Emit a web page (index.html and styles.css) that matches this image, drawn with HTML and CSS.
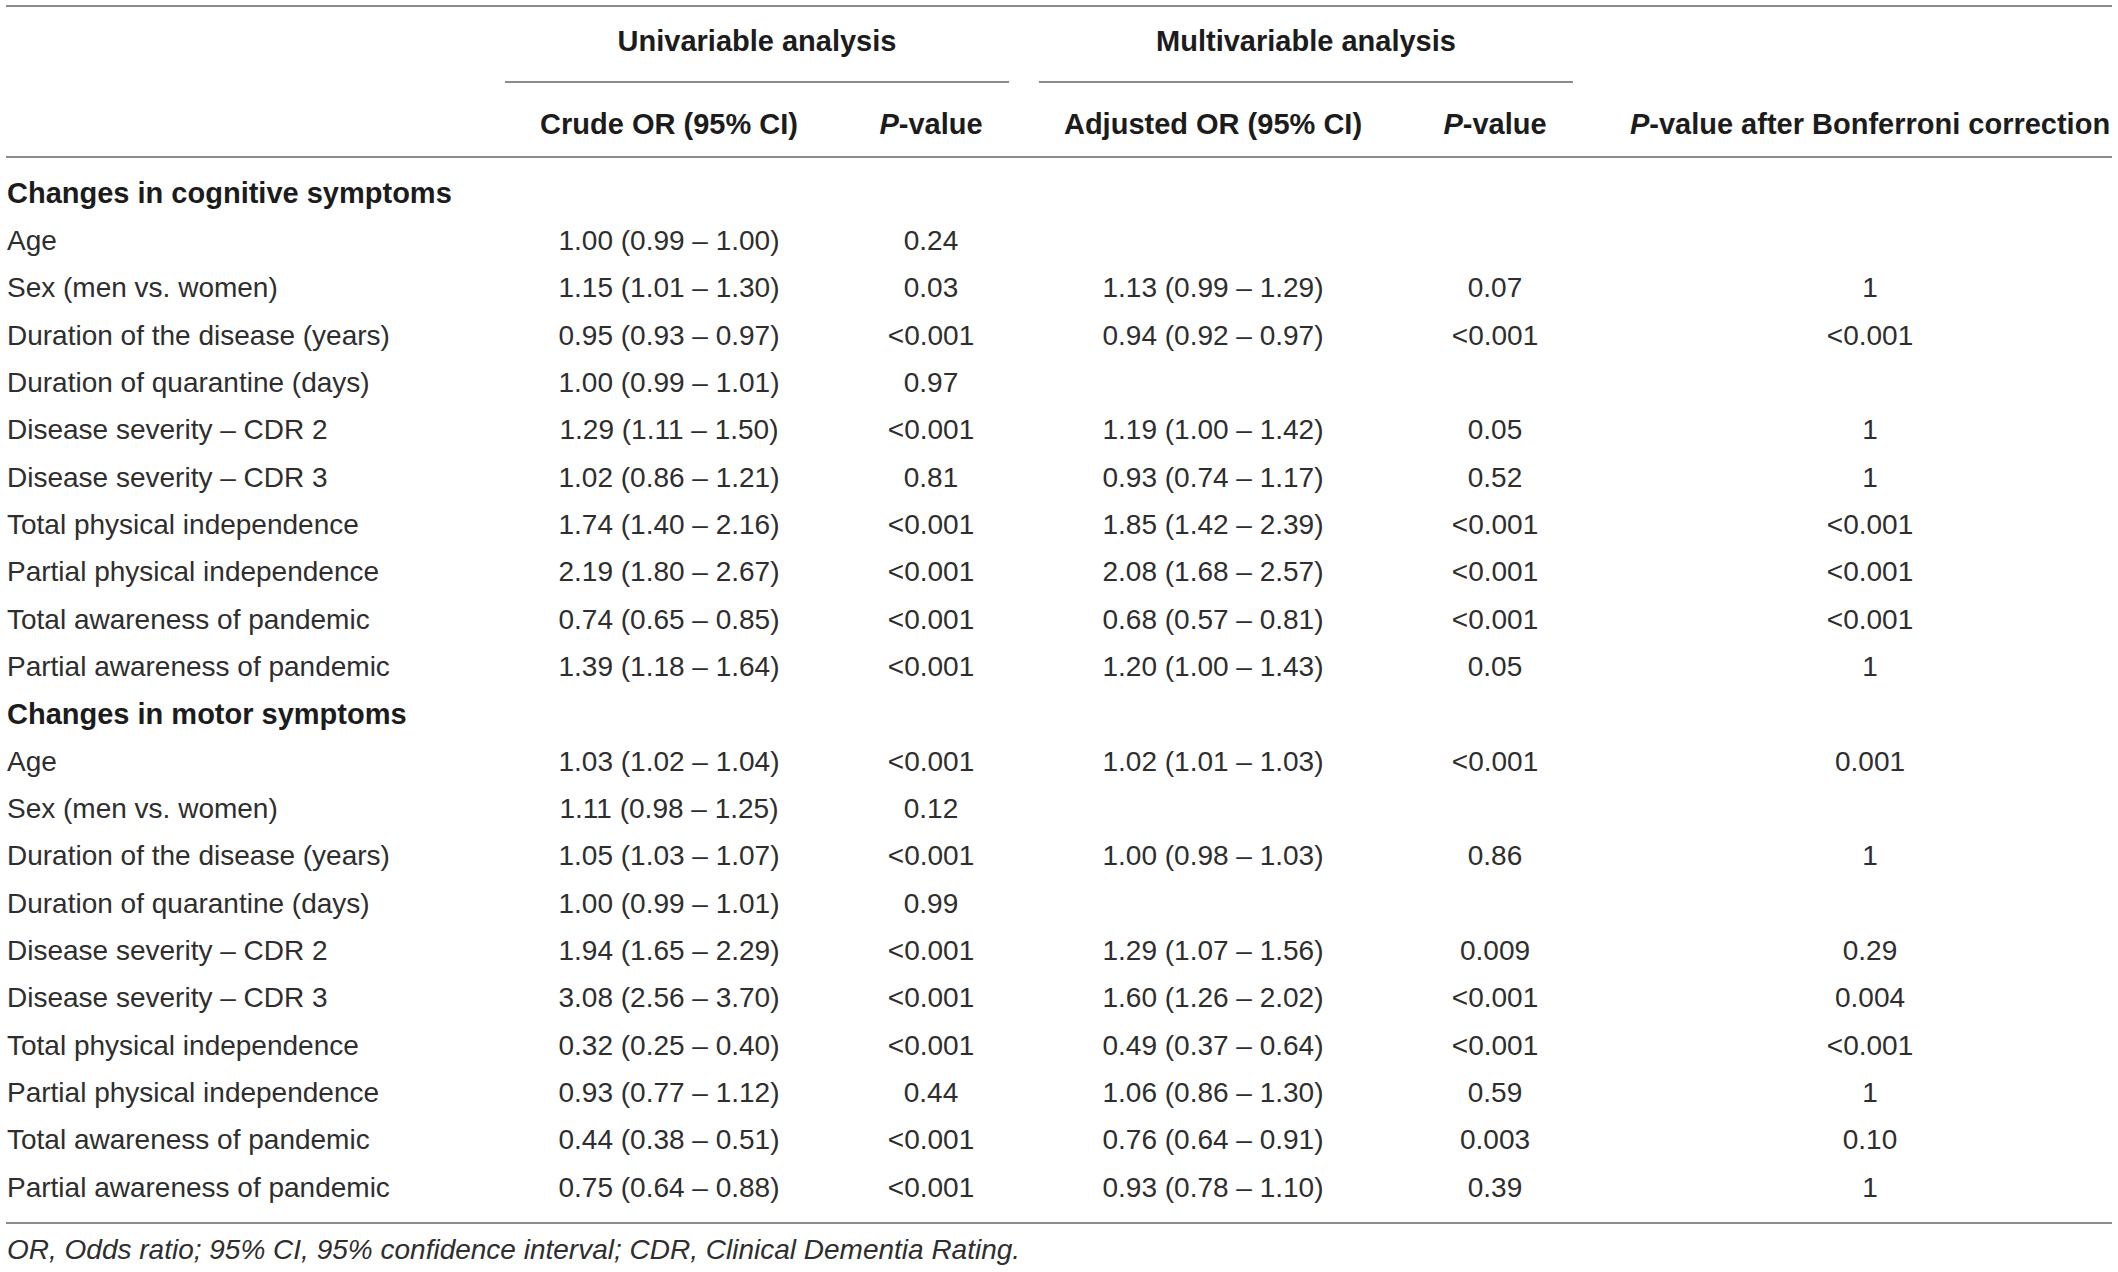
FILE: index.html
```html
<!DOCTYPE html>
<html lang="en">
<head>
<meta charset="utf-8">
<title>Odds ratios table</title>
<link rel="stylesheet" href="styles.css">
</head>
<body>
<div class="wrap">
<table class="tbl">
  <thead class="head">
    <tr class="group-row">
      <th class="c-label"></th>
      <th class="group g-uni"><span class="group-inner uni">Univariable analysis</span></th>
      <th class="group g-multi"><span class="group-inner multi">Multivariable analysis</span></th>
      <th class="c-bonf"></th>
    </tr>
    <tr class="col-row">
      <th class="c-label"></th>
      <th class="c-ci">Crude OR (95% CI)</th>
      <th class="c-p"><i>P</i>-value</th>
      <th class="c-ci">Adjusted OR (95% CI)</th>
      <th class="c-p2"><i>P</i>-value</th>
      <th class="c-bonf"><i>P</i>-value after Bonferroni correction</th>
    </tr>
  </thead>
  <tbody class="body">
    <tr class="row section"><th class="c-label">Changes in cognitive symptoms</th></tr>
    <tr class="row"><td class="c-label">Age</td><td class="c-ci">1.00 (0.99 – 1.00)</td><td class="c-p">0.24</td><td class="c-ci"></td><td class="c-p2"></td><td class="c-bonf"></td></tr>
    <tr class="row"><td class="c-label">Sex (men vs. women)</td><td class="c-ci">1.15 (1.01 – 1.30)</td><td class="c-p">0.03</td><td class="c-ci">1.13 (0.99 – 1.29)</td><td class="c-p2">0.07</td><td class="c-bonf">1</td></tr>
    <tr class="row"><td class="c-label">Duration of the disease (years)</td><td class="c-ci">0.95 (0.93 – 0.97)</td><td class="c-p">&lt;0.001</td><td class="c-ci">0.94 (0.92 – 0.97)</td><td class="c-p2">&lt;0.001</td><td class="c-bonf">&lt;0.001</td></tr>
    <tr class="row"><td class="c-label">Duration of quarantine (days)</td><td class="c-ci">1.00 (0.99 – 1.01)</td><td class="c-p">0.97</td><td class="c-ci"></td><td class="c-p2"></td><td class="c-bonf"></td></tr>
    <tr class="row"><td class="c-label">Disease severity – CDR 2</td><td class="c-ci">1.29 (1.11 – 1.50)</td><td class="c-p">&lt;0.001</td><td class="c-ci">1.19 (1.00 – 1.42)</td><td class="c-p2">0.05</td><td class="c-bonf">1</td></tr>
    <tr class="row"><td class="c-label">Disease severity – CDR 3</td><td class="c-ci">1.02 (0.86 – 1.21)</td><td class="c-p">0.81</td><td class="c-ci">0.93 (0.74 – 1.17)</td><td class="c-p2">0.52</td><td class="c-bonf">1</td></tr>
    <tr class="row"><td class="c-label">Total physical independence</td><td class="c-ci">1.74 (1.40 – 2.16)</td><td class="c-p">&lt;0.001</td><td class="c-ci">1.85 (1.42 – 2.39)</td><td class="c-p2">&lt;0.001</td><td class="c-bonf">&lt;0.001</td></tr>
    <tr class="row"><td class="c-label">Partial physical independence</td><td class="c-ci">2.19 (1.80 – 2.67)</td><td class="c-p">&lt;0.001</td><td class="c-ci">2.08 (1.68 – 2.57)</td><td class="c-p2">&lt;0.001</td><td class="c-bonf">&lt;0.001</td></tr>
    <tr class="row"><td class="c-label">Total awareness of pandemic</td><td class="c-ci">0.74 (0.65 – 0.85)</td><td class="c-p">&lt;0.001</td><td class="c-ci">0.68 (0.57 – 0.81)</td><td class="c-p2">&lt;0.001</td><td class="c-bonf">&lt;0.001</td></tr>
    <tr class="row"><td class="c-label">Partial awareness of pandemic</td><td class="c-ci">1.39 (1.18 – 1.64)</td><td class="c-p">&lt;0.001</td><td class="c-ci">1.20 (1.00 – 1.43)</td><td class="c-p2">0.05</td><td class="c-bonf">1</td></tr>
    <tr class="row section"><th class="c-label">Changes in motor symptoms</th></tr>
    <tr class="row"><td class="c-label">Age</td><td class="c-ci">1.03 (1.02 – 1.04)</td><td class="c-p">&lt;0.001</td><td class="c-ci">1.02 (1.01 – 1.03)</td><td class="c-p2">&lt;0.001</td><td class="c-bonf">0.001</td></tr>
    <tr class="row"><td class="c-label">Sex (men vs. women)</td><td class="c-ci">1.11 (0.98 – 1.25)</td><td class="c-p">0.12</td><td class="c-ci"></td><td class="c-p2"></td><td class="c-bonf"></td></tr>
    <tr class="row"><td class="c-label">Duration of the disease (years)</td><td class="c-ci">1.05 (1.03 – 1.07)</td><td class="c-p">&lt;0.001</td><td class="c-ci">1.00 (0.98 – 1.03)</td><td class="c-p2">0.86</td><td class="c-bonf">1</td></tr>
    <tr class="row"><td class="c-label">Duration of quarantine (days)</td><td class="c-ci">1.00 (0.99 – 1.01)</td><td class="c-p">0.99</td><td class="c-ci"></td><td class="c-p2"></td><td class="c-bonf"></td></tr>
    <tr class="row"><td class="c-label">Disease severity – CDR 2</td><td class="c-ci">1.94 (1.65 – 2.29)</td><td class="c-p">&lt;0.001</td><td class="c-ci">1.29 (1.07 – 1.56)</td><td class="c-p2">0.009</td><td class="c-bonf">0.29</td></tr>
    <tr class="row"><td class="c-label">Disease severity – CDR 3</td><td class="c-ci">3.08 (2.56 – 3.70)</td><td class="c-p">&lt;0.001</td><td class="c-ci">1.60 (1.26 – 2.02)</td><td class="c-p2">&lt;0.001</td><td class="c-bonf">0.004</td></tr>
    <tr class="row"><td class="c-label">Total physical independence</td><td class="c-ci">0.32 (0.25 – 0.40)</td><td class="c-p">&lt;0.001</td><td class="c-ci">0.49 (0.37 – 0.64)</td><td class="c-p2">&lt;0.001</td><td class="c-bonf">&lt;0.001</td></tr>
    <tr class="row"><td class="c-label">Partial physical independence</td><td class="c-ci">0.93 (0.77 – 1.12)</td><td class="c-p">0.44</td><td class="c-ci">1.06 (0.86 – 1.30)</td><td class="c-p2">0.59</td><td class="c-bonf">1</td></tr>
    <tr class="row"><td class="c-label">Total awareness of pandemic</td><td class="c-ci">0.44 (0.38 – 0.51)</td><td class="c-p">&lt;0.001</td><td class="c-ci">0.76 (0.64 – 0.91)</td><td class="c-p2">0.003</td><td class="c-bonf">0.10</td></tr>
    <tr class="row"><td class="c-label">Partial awareness of pandemic</td><td class="c-ci">0.75 (0.64 – 0.88)</td><td class="c-p">&lt;0.001</td><td class="c-ci">0.93 (0.78 – 1.10)</td><td class="c-p2">0.39</td><td class="c-bonf">1</td></tr>
  </tbody>
</table>
<p class="note">OR, Odds ratio; 95% CI, 95% confidence interval; CDR, Clinical Dementia Rating.</p>
</div>
</body>
</html>
```

FILE: styles.css
```css
html, body {
  margin: 0;
  padding: 0;
  background: #ffffff;
}

body {
  font-family: "Liberation Sans", Arial, sans-serif;
  color: #2e2e2e;
}

.wrap {
  width: 2106px;
  margin-left: 6px;
  padding-top: 5px;
}

.tbl {
  display: block;
  width: 2106px;
  border-collapse: collapse;
  border-top: 2px solid #8c8c8c;
  border-bottom: 2px solid #8c8c8c;
}

.head, .body {
  display: block;
}

.head {
  border-bottom: 2px solid #8c8c8c;
}

.body {
  padding: 12px 0 11px;
}

.group-row,
.col-row,
.row {
  display: grid;
  grid-template-columns: 484px 358px 166px 398px 216px 484px;
}

.group-row {
  grid-template-columns: 484px 524px 614px 484px;
  height: 76px;
}

th, td {
  display: block;
  padding: 0;
  white-space: nowrap;
}

th {
  font-size: 29px;
  font-weight: bold;
  color: #1c1c1c;
}

.group {
  display: flex;
  align-items: flex-end;
}

.group-inner {
  display: flex;
  align-items: center;
  justify-content: center;
  box-sizing: border-box;
  height: 76px;
  padding-bottom: 6px;
  border-bottom: 2px solid #8c8c8c;
}

.group-inner.uni {
  width: 504px;
  margin-left: 15px;
}

.group-inner.multi {
  width: 534px;
  margin-left: 25px;
}

.col-row {
  height: 73px;
  align-items: center;
}

.col-row th {
  padding-top: 10px;
  text-align: center;
}

.col-row th.c-p2 {
  padding-right: 50px;
}

.row {
  height: 47.34px;
  align-items: center;
}

.row td {
  font-size: 28px;
  text-align: center;
  color: #2e2e2e;
}

.row td.c-label {
  text-align: left;
  padding-left: 1px;
}

.row td.c-p2 {
  padding-right: 50px;
}

.section th.c-label {
  grid-column: 1 / -1;
  text-align: left;
  padding-left: 1px;
}

.note {
  margin: 8px 0 0 1px;
  font-size: 28px;
  font-style: italic;
  line-height: 36px;
  color: #2e2e2e;
}
```
